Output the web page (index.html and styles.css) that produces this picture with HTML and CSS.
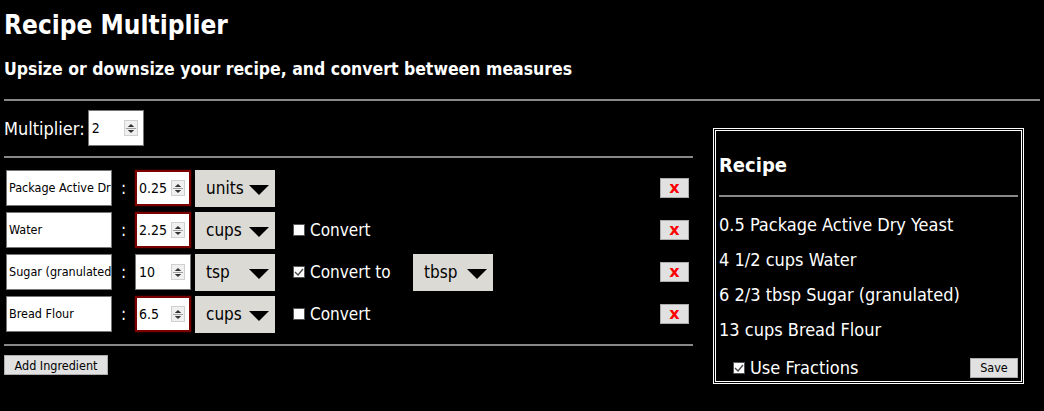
FILE: index.html
```html
<!DOCTYPE html>
<html>
<head>
<meta charset="utf-8">
<link rel="stylesheet" href="styles.css">
</head>
<body>
<h1 class="title">Recipe Multiplier</h1>
<h2 class="subtitle">Upsize or downsize your recipe, and convert between measures</h2>
<hr class="rule rule-full">
<div class="layout">
  <div class="editor">
    <div class="mult-row">
      <span class="mult-label">Multiplier:</span>
      <div class="num num-plain num-mult"><span class="num-val">2</span><span class="spin"><svg width="13" height="17" viewBox="0 0 13 17"><path d="M3 7 L6.5 3.5 L10 7 Z M3 10 L6.5 13.5 L10 10 Z" fill="#333"/><path d="M1 8.5 H12" stroke="#999" stroke-width="1"/></svg></span></div>
    </div>
    <hr class="rule">
    <div class="rows">
      <div class="row">
        <div class="name">Package Active Dry Yeast</div>
        <span class="colon">:</span>
        <div class="num num-bad"><span class="num-val">0.25</span><span class="spin"><svg width="13" height="17" viewBox="0 0 13 17"><path d="M3 7 L6.5 3.5 L10 7 Z M3 10 L6.5 13.5 L10 10 Z" fill="#333"/><path d="M1 8.5 H12" stroke="#999" stroke-width="1"/></svg></span></div>
        <div class="sel"><span class="sel-text">units</span><svg class="arrow" width="20" height="10" viewBox="0 0 20 10"><path d="M0 0 H20 L10 10 Z" fill="#000"/></svg></div>
        <button class="del">x</button>
      </div>
      <div class="row">
        <div class="name">Water</div>
        <span class="colon">:</span>
        <div class="num num-bad"><span class="num-val">2.25</span><span class="spin"><svg width="13" height="17" viewBox="0 0 13 17"><path d="M3 7 L6.5 3.5 L10 7 Z M3 10 L6.5 13.5 L10 10 Z" fill="#333"/><path d="M1 8.5 H12" stroke="#999" stroke-width="1"/></svg></span></div>
        <div class="sel"><span class="sel-text">cups</span><svg class="arrow" width="20" height="10" viewBox="0 0 20 10"><path d="M0 0 H20 L10 10 Z" fill="#000"/></svg></div>
        <label class="conv"><span class="cb"></span>Convert</label>
        <button class="del">x</button>
      </div>
      <div class="row">
        <div class="name">Sugar (granulated)</div>
        <span class="colon">:</span>
        <div class="num num-plain"><span class="num-val">10</span><span class="spin"><svg width="13" height="17" viewBox="0 0 13 17"><path d="M3 7 L6.5 3.5 L10 7 Z M3 10 L6.5 13.5 L10 10 Z" fill="#333"/><path d="M1 8.5 H12" stroke="#999" stroke-width="1"/></svg></span></div>
        <div class="sel"><span class="sel-text">tsp</span><svg class="arrow" width="20" height="10" viewBox="0 0 20 10"><path d="M0 0 H20 L10 10 Z" fill="#000"/></svg></div>
        <label class="conv conv-to"><span class="cb cb-on"><svg width="12" height="12" viewBox="0 0 12 12"><path d="M2 6 L5 9 L10 3" fill="none" stroke="#444" stroke-width="1.3"/></svg></span>Convert to</label>
        <div class="sel"><span class="sel-text">tbsp</span><svg class="arrow" width="20" height="10" viewBox="0 0 20 10"><path d="M0 0 H20 L10 10 Z" fill="#000"/></svg></div>
        <button class="del">x</button>
      </div>
      <div class="row">
        <div class="name">Bread Flour</div>
        <span class="colon">:</span>
        <div class="num num-bad"><span class="num-val">6.5</span><span class="spin"><svg width="13" height="17" viewBox="0 0 13 17"><path d="M3 7 L6.5 3.5 L10 7 Z M3 10 L6.5 13.5 L10 10 Z" fill="#333"/><path d="M1 8.5 H12" stroke="#999" stroke-width="1"/></svg></span></div>
        <div class="sel"><span class="sel-text">cups</span><svg class="arrow" width="20" height="10" viewBox="0 0 20 10"><path d="M0 0 H20 L10 10 Z" fill="#000"/></svg></div>
        <label class="conv"><span class="cb"></span>Convert</label>
        <button class="del">x</button>
      </div>
    </div>
    <hr class="rule rule-low">
    <button class="btn add">Add Ingredient</button>
  </div>
  <div class="panel">
    <h3 class="panel-title">Recipe</h3>
    <hr class="rule rule-panel">
    <div class="item">0.5 Package Active Dry Yeast</div>
    <div class="item">4 1/2 cups Water</div>
    <div class="item">6 2/3 tbsp Sugar (granulated)</div>
    <div class="item">13 cups Bread Flour</div>
    <div class="panel-foot">
      <label class="frac"><span class="cb cb-on"><svg width="12" height="12" viewBox="0 0 12 12"><path d="M2 6 L5 9 L10 3" fill="none" stroke="#444" stroke-width="1.3"/></svg></span>Use Fractions</label>
      <button class="btn save">Save</button>
    </div>
  </div>
</div>
</body>
</html>
```
FILE: styles.css
```css
* { box-sizing: border-box; }
html, body { background: #000; }
body {
  margin: 0;
  padding: 0 4px;
  color: #fff;
  font-family: "DejaVu Sans Condensed", "DejaVu Sans", sans-serif;
  font-size: 18px;
}
.title {
  margin: 8px 0 0;
  font-size: 26px;
  line-height: 34px;
  font-weight: bold;
}
.subtitle {
  margin: 15px 0 0;
  font-size: 17.5px;
  line-height: 24px;
  font-weight: bold;
}
.rule {
  border: 0;
  height: 2px;
  background: #888;
  margin: 0;
}
.rule-full { margin-top: 18px; }
.layout {
  display: flex;
  align-items: flex-start;
}
.editor {
  width: 689px;
  flex: none;
}
.mult-row {
  display: flex;
  align-items: center;
  margin-top: 9px;
  height: 36px;
  margin-bottom: 10px;
}
.mult-label { margin-right: 3px; }
.num {
  width: 56px;
  height: 36px;
  background: #fff;
  color: #000;
  display: flex;
  align-items: center;
  padding: 0 4px 0 2px;
  font-size: 14px;
}
.num-plain { border: 1px solid #767676; padding-left: 3px; padding-right: 5px; }
.num-bad { border: 2px solid #7a0000; box-shadow: 0 0 1px #c00; }
.num-val { flex: 1; }
.spin {
  width: 14px;
  height: 16px;
  background: #f0f0f0;
  border: 1px solid #d0d0d0;
  display: flex;
  align-items: center;
  justify-content: center;
}
.rows {
  margin-top: 12px;
  display: flex;
  flex-direction: column;
  gap: 6px;
}
.row {
  display: flex;
  align-items: center;
  height: 36px;
  padding-left: 2px;
  padding-right: 4px;
}
.name {
  width: 106px;
  height: 36px;
  background: #fff;
  color: #000;
  border: 1px solid #767676;
  font-size: 12.5px;
  line-height: 34px;
  padding-left: 2px;
  white-space: nowrap;
  overflow: hidden;
}
.colon {
  width: 23px;
  text-align: center;
  font-size: 17px;
}
.sel {
  width: 80px;
  height: 37px;
  background: #dcdad5;
  color: #000;
  margin-left: 4px;
  display: flex;
  align-items: center;
  padding: 0 6px 0 11px;
  font-size: 17px;
}
.sel-text { flex: 1; }
.arrow { margin-top: 3px; flex: none; }
.conv {
  display: flex;
  align-items: center;
  margin-left: 18px;
  font-size: 17px;
}
.conv-to { width: 116px; }
.cb {
  width: 12px;
  height: 12px;
  background: #fff;
  border: 1px solid #555;
  margin-right: 5px;
  display: inline-flex;
}
.cb svg { margin: -1px; }
.del {
  margin-left: auto;
  width: 29px;
  height: 20px;
  background: #e1e1e1;
  border: 1px solid #adadad;
  color: #f00;
  font-weight: bold;
  font-family: "DejaVu Sans", sans-serif;
  font-size: 16px;
  line-height: 14px;
  padding: 0;
  align-self: center;
}
.rule-low { margin-top: 12px; }
.btn {
  background: #e1e1e1;
  border: 1px solid #adadad;
  color: #000;
  font-family: "DejaVu Sans Condensed", "DejaVu Sans", sans-serif;
  font-size: 12.5px;
  padding: 0;
}
.add {
  margin-top: 9px;
  width: 104px;
  height: 20px;
}
.panel {
  margin-left: 20px;
  margin-top: 27px;
  width: 311px;
  height: 256px;
  border: 3px double #fff;
  padding: 0 3px;
}
.panel-title {
  margin: 0;
  padding-top: 21px;
  font-size: 20px;
  line-height: 26px;
  font-weight: bold;
}
.rule-panel { margin-top: 17px; margin-bottom: 16px; }
.item {
  height: 35px;
  line-height: 24px;
}
.panel-foot {
  display: flex;
  align-items: center;
  justify-content: space-between;
  margin-top: 4px;
}
.frac {
  display: flex;
  align-items: center;
  margin-left: 14px;
}
.save {
  width: 48px;
  height: 20px;
}
```
